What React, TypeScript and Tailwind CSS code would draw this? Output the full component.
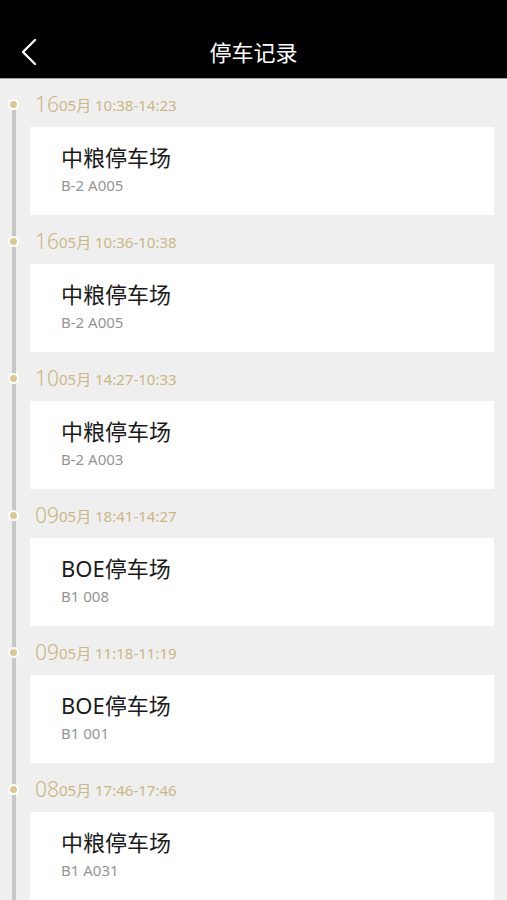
type Record = { day: string; time: string; name: string; spot: string };

const records: Record[] = [
  { day: "16", time: "05月 10:38-14:23", name: "中粮停车场", spot: "B-2 A005" },
  { day: "16", time: "05月 10:36-10:38", name: "中粮停车场", spot: "B-2 A005" },
  { day: "10", time: "05月 14:27-10:33", name: "中粮停车场", spot: "B-2 A003" },
  { day: "09", time: "05月 18:41-14:27", name: "BOE停车场", spot: "B1 008" },
  { day: "09", time: "05月 11:18-11:19", name: "BOE停车场", spot: "B1 001" },
  { day: "08", time: "05月 17:46-17:46", name: "中粮停车场", spot: "B1 A031" },
];

const font = {
  fontFamily: '"Noto Sans", "Noto Sans CJK SC", sans-serif',
};

function Item({ r }: { r: Record }) {
  return (
    <div className="relative pl-[30px] pr-[13px]">
      <div className="relative flex h-[24px] items-end">
        <span className="absolute left-[-22px] top-[7px] h-[11px] w-[11px] rounded-full border-2 border-white bg-[#dcc78e]" />
        <span className="pl-[5px] text-[21px] font-light leading-[24px] text-[#c9b57f]">{r.day}</span>
        <span className="pb-[1px] text-[15px] leading-[20px] text-[#cbb783]">{r.time}</span>
      </div>
      <div className="mt-[11px] mb-[14px] flex h-[88px] flex-col bg-white pl-[31px] pt-[16px]">
        <div className="text-[22px] leading-[28px] text-[#1a1a1a]">{r.name}</div>
        <div className="mt-[4px] text-[15px] leading-[20px] text-[#959595]">{r.spot}</div>
      </div>
    </div>
  );
}

export default function App() {
  return (
    <div className="h-[900px] w-[507px] overflow-hidden bg-[#efefef]" style={font}>
      <div className="relative flex h-[79px] items-end justify-center border-b border-[#a0a0a0] bg-black pb-[11px]">
        <svg className="absolute left-[20px] top-[38px]" width="18" height="28" viewBox="0 0 18 28" fill="none">
          <polyline points="15,2 3,14 15,26" stroke="white" strokeWidth="2.4" strokeLinecap="round" strokeLinejoin="round" />
        </svg>
        <span className="text-[22px] leading-[30px] text-white">停车记录</span>
      </div>
      <div className="relative pt-[13px]">
        <div className="absolute left-[12px] top-[26px] bottom-0 w-[4px] bg-[#c7c7c7]" />
        {records.map((r, i) => (
          <Item key={i} r={r} />
        ))}
      </div>
    </div>
  );
}
